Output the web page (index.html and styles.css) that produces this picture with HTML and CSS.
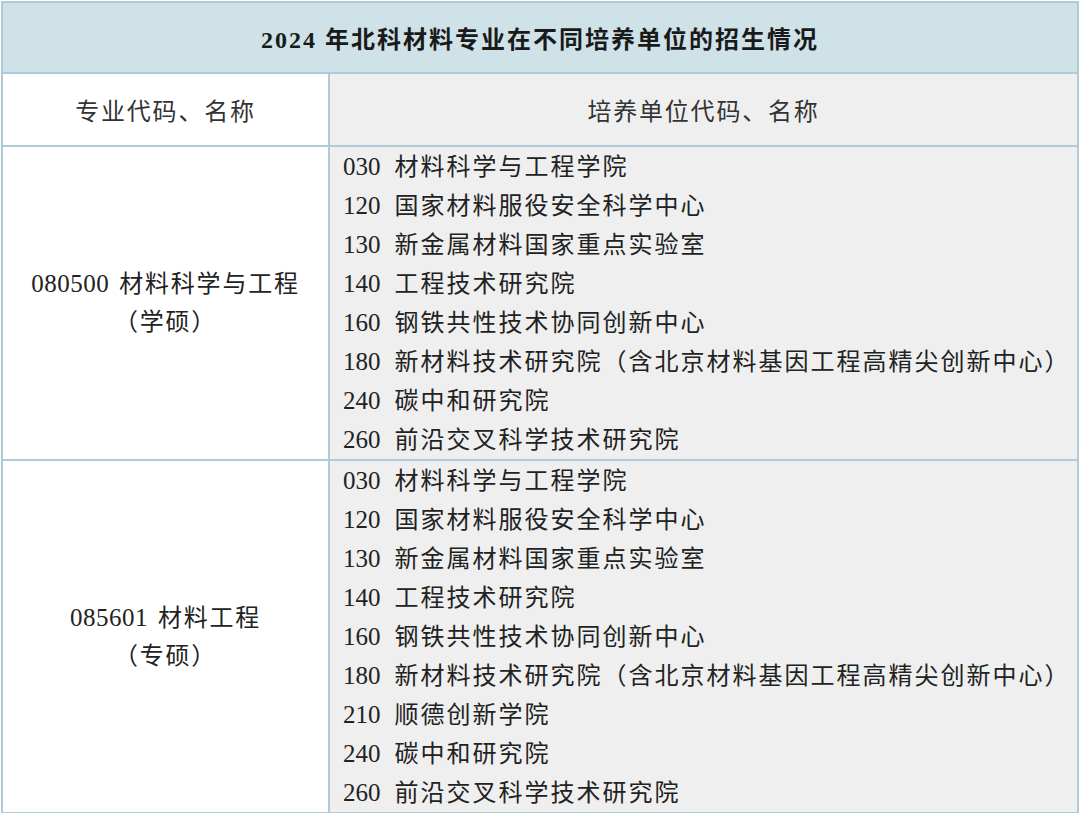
FILE: index.html
```html
<!DOCTYPE html>
<html lang="zh-CN">
<head>
<meta charset="utf-8">
<link rel="stylesheet" href="styles.css">
</head>
<body>
<div class="wrap">
<table class="tbl">
  <colgroup><col class="c1"><col class="c2"></colgroup>
  <thead>
    <tr><th colspan="2" class="title">2024 年北科材料专业在不同培养单位的招生情况</th></tr>
    <tr><th class="head left">专业代码、名称</th><th class="head right">培养单位代码、名称</th></tr>
  </thead>
  <tbody>
    <tr>
      <td class="major"><span class="code">080500</span>材料科学与工程<br>（学硕）</td>
      <td class="units">
        <div class="u"><span class="code">030</span>材料科学与工程学院</div>
        <div class="u"><span class="code">120</span>国家材料服役安全科学中心</div>
        <div class="u"><span class="code">130</span>新金属材料国家重点实验室</div>
        <div class="u"><span class="code">140</span>工程技术研究院</div>
        <div class="u"><span class="code">160</span>钢铁共性技术协同创新中心</div>
        <div class="u"><span class="code">180</span>新材料技术研究院（含北京材料基因工程高精尖创新中心）</div>
        <div class="u"><span class="code">240</span>碳中和研究院</div>
        <div class="u"><span class="code">260</span>前沿交叉科学技术研究院</div>
      </td>
    </tr>
    <tr>
      <td class="major"><span class="code">085601</span>材料工程<br>（专硕）</td>
      <td class="units">
        <div class="u"><span class="code">030</span>材料科学与工程学院</div>
        <div class="u"><span class="code">120</span>国家材料服役安全科学中心</div>
        <div class="u"><span class="code">130</span>新金属材料国家重点实验室</div>
        <div class="u"><span class="code">140</span>工程技术研究院</div>
        <div class="u"><span class="code">160</span>钢铁共性技术协同创新中心</div>
        <div class="u"><span class="code">180</span>新材料技术研究院（含北京材料基因工程高精尖创新中心）</div>
        <div class="u"><span class="code">210</span>顺德创新学院</div>
        <div class="u"><span class="code">240</span>碳中和研究院</div>
        <div class="u"><span class="code">260</span>前沿交叉科学技术研究院</div>
      </td>
    </tr>
  </tbody>
</table>
</div>
</body>
</html>
```
FILE: styles.css
```css
html, body {
  margin: 0;
  padding: 0;
  background: #ffffff;
}
.wrap {
  padding: 1px 1px 0 1px;
}
.tbl {
  width: 1078px;
  border-collapse: collapse;
  font-family: "Liberation Serif", "Noto Sans CJK SC", serif;
  font-size: 24px;
  color: #222222;
  table-layout: fixed;
}
.c1 {
  width: 327px;
}
.tbl th, .tbl td {
  border: 2px solid #afcbd8;
  padding: 0;
}
.title {
  height: 69px;
  background: #cfe2e8;
  font-weight: bold;
  font-size: 24px;
  letter-spacing: 2px;
  color: #1a1a1a;
  text-align: center;
}
.head {
  height: 71px;
  font-weight: normal;
  text-align: center;
  letter-spacing: 1.8px;
  color: #333333;
}
.head.left {
  background: #ffffff;
}
.head.right {
  background: #efefef;
}
.major {
  background: #ffffff;
  text-align: center;
  vertical-align: middle;
  line-height: 38px;
  letter-spacing: 1.8px;
  color: #222222;
}
.major .code {
  font-size: 25px;
  letter-spacing: 0.5px;
  margin-right: 10px;
}
.units {
  background: #efefef;
  vertical-align: top;
}
.tbl td.units {
  padding-left: 13px;
}
.u {
  height: 39px;
  line-height: 39px;
  letter-spacing: 2px;
  white-space: nowrap;
}
.u .code {
  font-size: 25px;
  letter-spacing: 0;
  margin-right: 14px;
}
```
